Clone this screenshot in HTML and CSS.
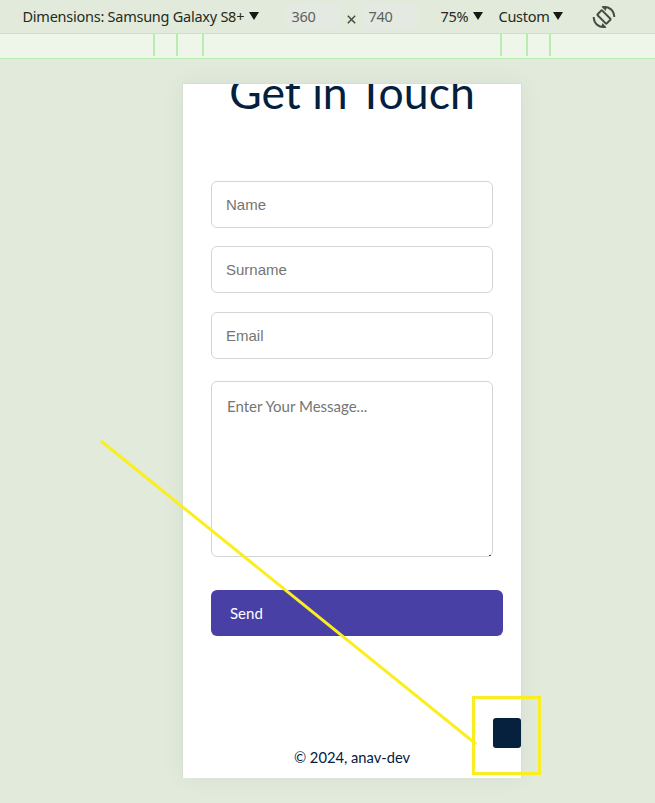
FILE: index.html
```html
<!DOCTYPE html>
<html lang="en">
<head>
<meta charset="utf-8">
<title>Get in Touch</title>
<link rel="stylesheet" href="styles.css">
</head>
<body>
<header class="toolbar">
  <span class="device">Dimensions: Samsung Galaxy S8+</span>
  <svg class="arrow" viewBox="0 0 10 8"><path d="M0 0h10L5 8z"/></svg>
  <span class="size width">360</span>
  <svg class="times" viewBox="0 0 9 9"><path d="M.8.8l7.4 7.4M8.200.8L.8 8.200"/></svg>
  <span class="size height">740</span>
  <span class="zoom">75%</span>
  <svg class="arrow" viewBox="0 0 10 8"><path d="M0 0h10L5 8z"/></svg>
  <span class="throttle">Custom</span>
  <svg class="arrow" viewBox="0 0 10 8"><path d="M0 0h10L5 8z"/></svg>
  <svg class="rotate" viewBox="0 0 24 24">
    <rect x="8.700" y="5.500" width="6.600" height="13" rx=".8" transform="rotate(-45 12 12)"/>
    <path d="M10.500 2.200C17 1.200 22 5 22.300 12M13.500 21.800C7 22.800 2 19 1.700 12"/>
    <path class="head" d="M9.500 1.200l5.500.5-1.500 4.300zM14.500 22.800l-5.500-.5 1.500-4.300z"/>
  </svg>
</header>
<div class="ruler">
  <i></i><i></i><i></i><i></i><i></i><i></i>
</div>
<main class="stage">
  <section class="phone">
    <h1>Get in Touch</h1>
    <form>
      <input type="text" placeholder="Name">
      <input type="text" placeholder="Surname">
      <input type="text" placeholder="Email">
      <div class="message">
        <textarea placeholder="Enter Your Message..."></textarea>
      </div>
      <button type="button">Send</button>
    </form>
    <footer>© 2024, anav-dev</footer>
    <div class="scroll-top"></div>
  </section>
</main>
<svg class="annotation" viewBox="0 0 655 803">
  <path d="M101 441L476 744"/>
  <rect x="473.500" y="697.500" width="66" height="76"/>
</svg>
</body>
</html>
```
FILE: styles.css
```css
* { box-sizing: border-box; }
body {
  margin: 0;
  width: 655px;
  height: 803px;
  overflow: hidden;
  position: relative;
  background: #e1eadb;
  font-family: Lato, sans-serif;
}
.toolbar {
  display: flex;
  align-items: center;
  height: 33px;
  padding-left: 22.500px;
  font: 14.500px/20px "Noto Sans", "Open Sans", sans-serif;
  letter-spacing: -0.250px;
  color: #252a22;
  white-space: nowrap;
}
.toolbar > * { flex: none; }
.device, .zoom, .throttle { margin-top: -2px; }
.device { width: 222px; }
.arrow { width: 10px; height: 8px; margin: -1px 0 0 4px; fill: #161a14; }
.size { height: 25px; line-height: 25px; background: #e4e9e1; color: #5d6259; border-radius: 3px; }
.width { width: 54px; margin-left: 27px; padding-left: 6px; }
.times { width: 9px; height: 9px; margin: 6px 0 0 7px; fill: none; stroke: #454b42; stroke-width: 1.500; }
.height { width: 55px; margin-left: 7px; padding-left: 6px; }
.zoom { width: 28px; margin-left: 23px; }
.throttle { width: 50px; margin-left: 16px; }
.rotate { width: 24px; height: 24px; margin-left: 29px; fill: none; stroke: #454c42; stroke-width: 2; }
.rotate .head { fill: #454c42; stroke: none; }
.ruler {
  display: grid;
  grid-template-columns: 23px 26px 298px 26px 23px 2px;
  padding-left: 153px;
  height: 26px;
  background: #eef5e9;
  border-top: 1px solid #b9edb0;
  border-bottom: 1px solid #b9edb0;
}
.ruler i { width: 2px; height: 22px; background: #b9edb0; }
.stage { padding: 24px 0 0 182px; }
.phone {
  position: relative;
  width: 340px;
  height: 695px;
  padding: 0 28px;
  overflow: hidden;
  background: #fff;
  border: 1px solid #d6ddd2;
  border-bottom: 0;
  box-shadow: 0 0 20px rgba(90, 100, 90, .07);
}
h1 {
  margin: -22px -28px 0;
  height: 62px;
  font-size: 44.500px;
  line-height: 60px;
  font-weight: 400;
  text-align: center;
  color: #03203f;
}
form { display: flex; flex-direction: column; padding-top: 57px; }
input, textarea {
  width: 282px;
  border: 1px solid #d3d5d6;
  border-radius: 6px;
  background: #fff;
  outline: 0;
}
input { height: 47px; margin: 0 0 18.400px; padding: 0 14px; font: 15px "Liberation Sans", sans-serif; }
.message { position: relative; width: 282px; height: 176px; margin-top: 3.800px; }
.message::after {
  content: "";
  position: absolute;
  right: 2px;
  bottom: 1px;
  width: 2px;
  height: 1px;
  background: #444;
}
textarea {
  display: block;
  height: 176px;
  padding: 15px 15px;
  font: 15px/18px Lato, sans-serif;
  resize: none;
}
::placeholder { color: #757575; opacity: 1; }
button {
  width: 291.500px;
  height: 46.500px;
  margin-top: 33px;
  padding: 0 19px;
  border: 0;
  border-radius: 6px;
  background: #4840a5;
  color: #fff;
  font: 15px Lato, sans-serif;
  text-align: left;
}
footer { margin-top: 110.500px; font-size: 14.700px; line-height: 20px; text-align: center; color: #03203f; }
.scroll-top {
  position: absolute;
  right: 0;
  bottom: 30px;
  width: 28.500px;
  height: 30.500px;
  border-radius: 3px;
  background: #06213e;
}
.annotation {
  position: absolute;
  top: 0;
  left: 0;
  width: 655px;
  height: 803px;
  fill: none;
  stroke: #fbee20;
  stroke-width: 3;
}
```
